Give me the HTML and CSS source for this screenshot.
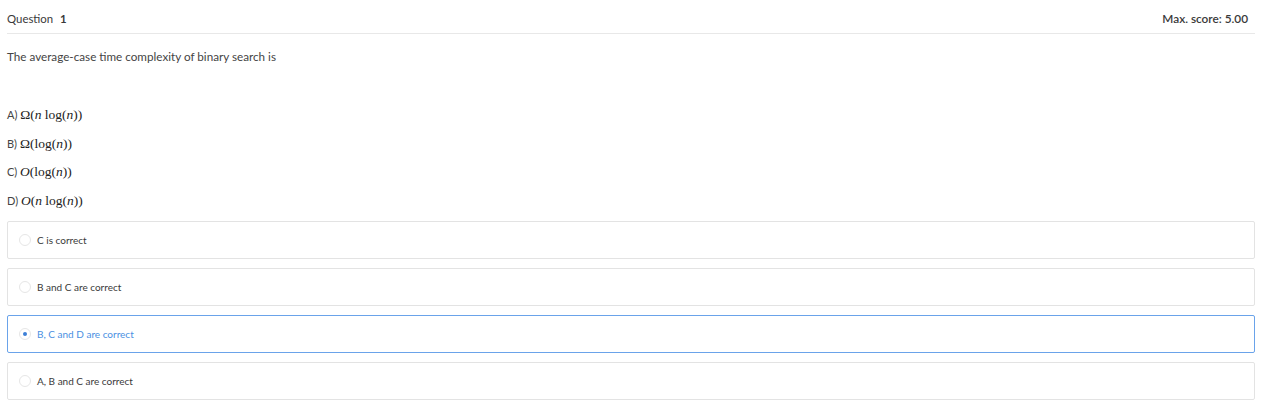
FILE: index.html
```html
<!DOCTYPE html>
<html>
<head>
<meta charset="utf-8">
<link rel="stylesheet" href="styles.css">
</head>
<body>
<div class="question">
  <div class="q-header">
    <div class="q-title">Question <span class="q-num">1</span></div>
    <div class="q-score">Max. score: 5.00</div>
  </div>
  <p class="q-text">The average-case time complexity of binary search is</p>
  <div class="choices-text">
    <div class="choice-line">A) <span class="math">Ω(<i>n</i> log(<i>n</i>))</span></div>
    <div class="choice-line">B) <span class="math">Ω(log(<i>n</i>))</span></div>
    <div class="choice-line">C) <span class="math"><i>O</i>(log(<i>n</i>))</span></div>
    <div class="choice-line">D) <span class="math"><i>O</i>(<i>n</i> log(<i>n</i>))</span></div>
  </div>
  <div class="answers">
    <label class="answer"><span class="radio"></span><span class="answer-text">C is correct</span></label>
    <label class="answer"><span class="radio"></span><span class="answer-text">B and C are correct</span></label>
    <label class="answer selected"><span class="radio"></span><span class="answer-text">B, C and D are correct</span></label>
    <label class="answer"><span class="radio"></span><span class="answer-text">A, B and C are correct</span></label>
  </div>
</div>
</body>
</html>
```
FILE: styles.css
```css
* { box-sizing: border-box; }
html, body { margin: 0; padding: 0; background: #fff; }
body {
  font-family: Lato, "Open Sans", "Liberation Sans", sans-serif;
  color: #3c3c3c;
}
.question {
  width: 1248px;
  margin-left: 7px;
}
.q-header {
  display: flex;
  justify-content: space-between;
  align-items: center;
  height: 34px;
  padding-top: 4px;
  border-bottom: 1px solid #e8e8e8;
  font-size: 11.4px;
  color: #3a3a3a;
}
.q-title { font-weight: 400; }
.q-num { font-weight: 700; margin-left: 4px; }
.q-score { font-weight: 600; padding-right: 7px; font-size: 11.8px; }
.q-text {
  margin: 15px 0 0 0;
  font-size: 11.7px;
  line-height: 14px;
  color: #444;
}
.choices-text {
  margin-top: 42px;
}
.choice-line {
  font-size: 11px;
  line-height: 20px;
  height: 28.5px;
  color: #444;
}
.math {
  font-family: "Liberation Serif", "DejaVu Serif", serif;
  font-size: 13.5px;
  color: #222;
  line-height: 20px;
}
.math i { font-style: italic; }
.answers {
  margin-top: 2px;
  display: flex;
  flex-direction: column;
  gap: 9px;
}
.answer {
  display: flex;
  align-items: center;
  height: 38px;
  border: 1px solid #e3e3e3;
  border-radius: 2px;
  padding-left: 11px;
  font-size: 10px;
  color: #3a3a3a;
}
.radio {
  width: 12px;
  height: 12px;
  border-radius: 50%;
  border: 1px solid #e6e6e6;
  margin-right: 6px;
  display: flex;
  align-items: center;
  justify-content: center;
  flex-shrink: 0;
}
.answer.selected {
  border-color: #6aa3ea;
  color: #4a90e2;
}
.answer.selected .radio::after {
  content: "";
  width: 4px;
  height: 4px;
  border-radius: 50%;
  background: #3d7fd6;
}
```
